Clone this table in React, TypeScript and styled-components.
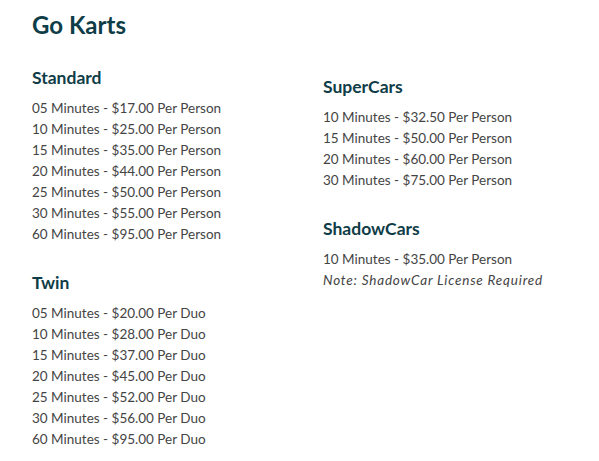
import React from "react";
import styled, { createGlobalStyle } from "styled-components";

const Global = createGlobalStyle`
  html, body { margin: 0; padding: 0; background: #fff; }
  body { font-family: Lato, "Liberation Sans", sans-serif; }
`;

const Page = styled.div`
  padding: 10px 32px 0 32px;
  width: 599px;
  box-sizing: border-box;
`;

const Title = styled.h1`
  margin: 0;
  font-size: 24px;
  line-height: 30px;
  font-weight: 700;
  color: #0f3d47;
`;

const Columns = styled.div`
  display: grid;
  grid-template-columns: 291px 1fr;
  margin-top: 27px;
`;

const Column = styled.div<{ $offset?: number }>`
  display: flex;
  flex-direction: column;
  gap: 27px;
  padding-top: ${(p) => p.$offset ?? 0}px;
`;

const Section = styled.section`
  display: flex;
  flex-direction: column;
`;

const Heading = styled.h2`
  margin: 0 0 9px 0;
  font-size: 17.5px;
  line-height: 22px;
  font-weight: 700;
  color: #0f3d47;
`;

const Row = styled.div<{ $italic?: boolean }>`
  font-size: 13.5px;
  line-height: 21px;
  color: #444444;
  font-style: ${(p) => (p.$italic ? "italic" : "normal")};
  letter-spacing: ${(p) => (p.$italic ? "0.8px" : "0")};
`;

const data = {
  standard: ["05 Minutes - $17.00 Per Person", "10 Minutes - $25.00 Per Person", "15 Minutes - $35.00 Per Person", "20 Minutes - $44.00 Per Person", "25 Minutes - $50.00 Per Person", "30 Minutes - $55.00 Per Person", "60 Minutes - $95.00 Per Person"],
  twin: ["05 Minutes - $20.00 Per Duo", "10 Minutes - $28.00 Per Duo", "15 Minutes - $37.00 Per Duo", "20 Minutes - $45.00 Per Duo", "25 Minutes - $52.00 Per Duo", "30 Minutes - $56.00 Per Duo", "60 Minutes - $95.00 Per Duo"],
  super: ["10 Minutes - $32.50 Per Person", "15 Minutes - $50.00 Per Person", "20 Minutes - $60.00 Per Person", "30 Minutes - $75.00 Per Person"],
};

export default function App() {
  return (
    <Page>
      <Global />
      <Title>Go Karts</Title>
      <Columns>
        <Column>
          <Section>
            <Heading>Standard</Heading>
            {data.standard.map((r) => <Row key={r}>{r}</Row>)}
          </Section>
          <Section>
            <Heading>Twin</Heading>
            {data.twin.map((r) => <Row key={r}>{r}</Row>)}
          </Section>
        </Column>
        <Column $offset={9}>
          <Section>
            <Heading>SuperCars</Heading>
            {data.super.map((r) => <Row key={r}>{r}</Row>)}
          </Section>
          <Section>
            <Heading>ShadowCars</Heading>
            <Row>10 Minutes - $35.00 Per Person</Row>
            <Row $italic>Note: ShadowCar License Required</Row>
          </Section>
        </Column>
      </Columns>
    </Page>
  );
}
